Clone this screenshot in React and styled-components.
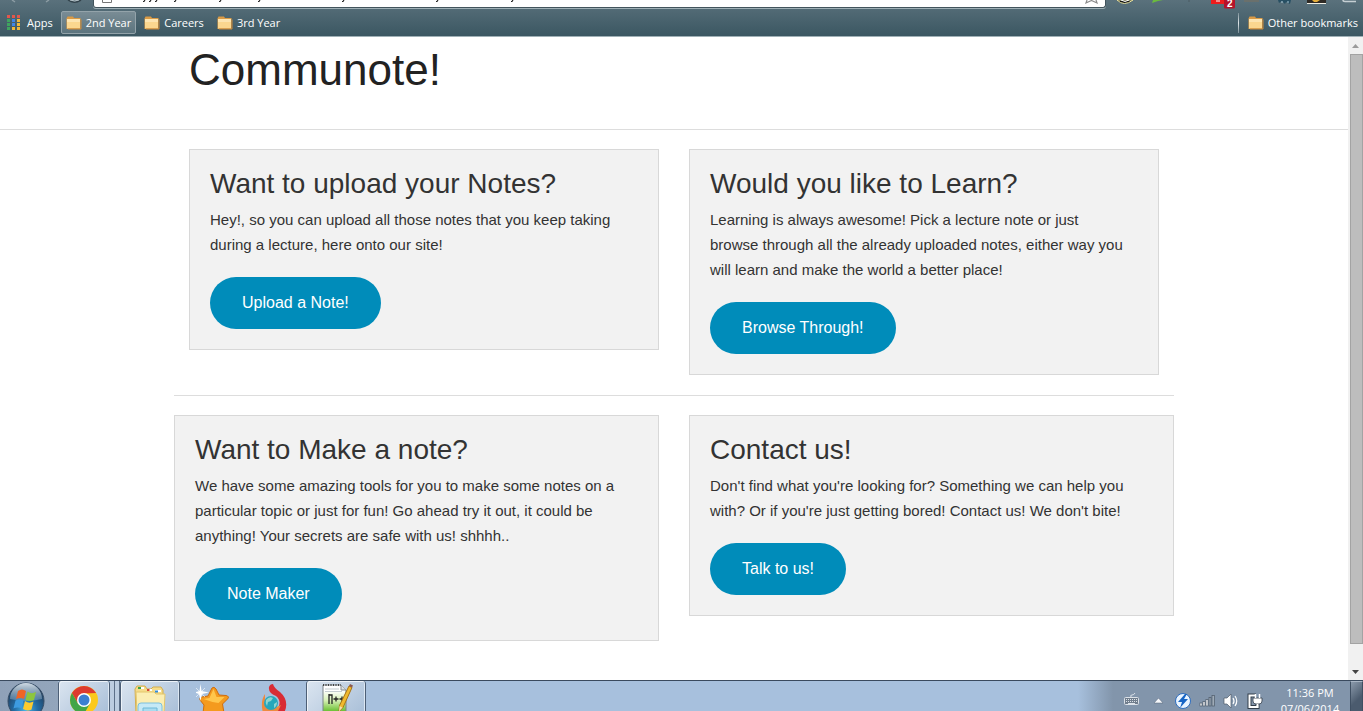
import React from 'react';
import styled, { createGlobalStyle } from 'styled-components';

const GlobalStyle = createGlobalStyle`
  * { box-sizing: border-box; }
  html, body { margin: 0; }
  body { background: #fff; color: #222; font-family: "Liberation Sans", Arial, sans-serif; }
  svg { display: block; flex: none; }
`;

const Desktop = styled.div`
  display: flex;
  flex-direction: column;
  height: 100vh;
  overflow: hidden;
`;

/* Browser chrome */
const Chrome = styled.header`
  flex: none;
  background: linear-gradient(#5a717c, #3b5762);
  border-bottom: 1px solid #9fb0b6;
  font-family: "Open Sans", "Noto Sans", sans-serif;
`;

const AddressRow = styled.div`
  display: flex;
  height: 9px;
  overflow: hidden;
`;

const AddressBox = styled.label`
  flex: 1;
  min-width: 0;
  display: flex;
  height: 8px;
  background: #fff;
  border: 1px solid #42545c;
  border-top: 0;
  border-radius: 0 0 3px 3px;
  box-shadow: 0 1px 0 #9fb0b6;
`;

const AddressInput = styled.input`
  flex: 1;
  min-width: 0;
  height: 6px;
  padding: 0;
  border: 0;
  outline: 0;
  background: transparent;
`;

const BookmarkBar = styled.nav`
  display: flex;
  align-items: center;
  height: 27px;
  padding-left: 2px;
`;

const Bookmark = styled.a`
  display: flex;
  align-items: center;
  gap: 4px;
  height: 23px;
  margin-right: 3px;
  padding: 0 4px;
  border: 1px solid ${p => (p.$active ? '#93a3aa' : 'transparent')};
  border-radius: 2px;
  background: ${p => (p.$active ? 'linear-gradient(#798c95, #5c747e)' : 'none')};
  color: #fff;
  font-size: 11px;
  line-height: 16px;
  text-decoration: none;
  white-space: nowrap;

  &:last-child { margin-right: 0; }
`;

const BarSpacer = styled.div`
  flex: 1;
`;

const BarDivider = styled.span`
  width: 1px;
  height: 20px;
  margin-right: 4px;
  background: linear-gradient(#7b8f98, #dfe6e8, #7b8f98);
`;

/* Page viewport */
const Viewport = styled.div`
  flex: 1;
  min-height: 0;
  display: flex;
`;

const Page = styled.main`
  flex: 1;
  min-width: 0;
  overflow: hidden;
`;

const Masthead = styled.div`
  padding: 2px 0 28px;
  border-bottom: 1px solid #ddd;
`;

const Container = styled.div`
  max-width: 1000px;
  margin: 0 auto;
`;

const SiteTitle = styled.h1`
  margin: 0;
  padding: 0 15px;
  color: #222;
  font-size: 44px;
  font-weight: 400;
  line-height: 62px;
`;

const Row = styled.section`
  display: grid;
  grid-template-columns: 1fr 1fr;
  gap: 30px;
  align-items: start;
  padding: 19px ${p => (p.$inset ? 15 : 0)}px 20px;
`;

const Rule = styled.hr`
  height: 1px;
  margin: 0;
  border: 0;
  background: #ddd;
`;

const Panel = styled.article`
  padding: 20px;
  border: 1px solid #d8d8d8;
  background: #f2f2f2;
`;

const PanelTitle = styled.h3`
  margin: 0 0 10px;
  color: #333;
  font-size: 28px;
  font-weight: 400;
  line-height: 27px;
`;

const PanelText = styled.p`
  margin: 0 0 20px;
  color: #333;
  font-size: 15px;
  line-height: 25px;
  white-space: pre-line;
`;

const RoundButton = styled.button`
  display: block;
  height: 52px;
  padding: 0 32px;
  border: 0;
  border-radius: 26px;
  background: #008cba;
  color: #fff;
  font-family: inherit;
  font-size: 16px;
  line-height: 20px;
  cursor: pointer;
`;

const ScrollTrack = styled.div`
  flex: none;
  display: flex;
  flex-direction: column;
  align-items: center;
  width: 15px;
  background: #f1f1f1;
`;

const ScrollArrow = styled.span`
  display: flex;
  align-items: center;
  justify-content: center;
  width: 15px;
  height: 17px;
`;

const ScrollThumb = styled.div`
  flex: 1;
  width: 13px;
  margin: 0 0 0 2px;
  border: 1px solid #a3a3a3;
  background: #bdbdbd;
`;

const ScrollGap = styled.div`
  height: 19px;
`;

/* Taskbar */
const Taskbar = styled.footer`
  flex: none;
  display: flex;
  height: 31px;
  overflow: hidden;
  border-top: 1px solid #3a4a5e;
  background: #a7c0dd;
  font-family: "Open Sans", "Noto Sans", sans-serif;
`;

const StartButton = styled.button`
  width: 58px;
  padding: 0;
  border: 0;
  background: linear-gradient(90deg, #8fa1b8, #93a5bb);
`;

const TaskButton = styled.button`
  display: flex;
  justify-content: center;
  width: ${p => p.$width}px;
  height: 32px;
  margin-right: ${p => p.$after || 0}px;
  padding: 0;
  border: 1px solid ${p => (p.$open ? '#4d5f76' : 'transparent')};
  border-top: 0;
  border-radius: 3px 3px 0 0;
  background: ${p => (p.$open ? 'linear-gradient(135deg, #dbe5f0, #a9bfd8)' : 'none')};
  box-shadow: ${p => (p.$open ? 'inset 1px 1px 0 #edf3f9, inset -1px 0 0 #dce7f2' : 'none')};
`;

const StackEdge = styled.span`
  width: 5px;
  height: 32px;
  border-right: 1px solid #5d7088;
  background: #bccde0;
`;

const Tray = styled.div`
  display: flex;
  align-items: flex-start;
  margin-left: auto;
  padding-left: 40px;
  background: linear-gradient(90deg, #a7c0dd 15px, #8295ab 50px);
`;

const Clock = styled.time`
  width: 80px;
  padding-top: 4px;
  color: #fff;
  font-size: 11px;
  line-height: 16px;
  text-align: center;
`;

const ShowDesktop = styled.button`
  width: 13px;
  height: 32px;
  padding: 0;
  border: 1px solid #3f4f62;
  border-top-color: #a9b6c5;
  background: linear-gradient(135deg, #8b9aab, #4b5b6e 60%);
`;

const FolderIcon = () => (
  <svg width="16" height="16" viewBox="0 0 16 16" aria-hidden="true">
    <path d="M.5 3.5 1.500 1.500h5.500l1 1.500h6.500V14H.5Z" fill="#d99a45" />
    <path d="M1 4h13v9.500H1Z" fill="#fbd78f" />
    <path d="M1 4h13v3H1Z" fill="#fde5b1" />
    <path d="M15 4.500V14H2" fill="none" stroke="#c98a3c" />
  </svg>
);

const appColors = [
  '#e2574c', '#e2574c', '#e2574c',
  '#3fa55f', '#3f86e8', '#f0b93a',
  '#3fa55f', '#3f86e8', '#f0b93a',
  '#3fa55f', '#f0b93a', '#f0b93a',
];

const AppsIcon = () => (
  <svg width="16" height="15" viewBox="0 0 16 15" aria-hidden="true">
    {appColors.map((c, i) => (
      <rect key={i} x={(i % 3) * 5} y={Math.floor(i / 3) * 4} width="3" height="3" fill={c} />
    ))}
  </svg>
);

const NavButtons = () => (
  <svg width="93" height="8" viewBox="0 0 93 8" aria-hidden="true">
    <path d="M12 0l3 2M46 2l3-2" stroke="#8b9ba3" strokeWidth="1.500" />
    <path d="M68 0q6 4.500 13 0" fill="none" stroke="#33434c" strokeWidth="1.500" />
    <path d="M70 0q5 2 9 0" fill="none" stroke="#b7c3c8" />
  </svg>
);

const urlMarks = [48, 54, 60, 79, 124, 163, 247, 341, 416];

const PageGlyph = () => (
  <svg width="440" height="7" viewBox="0 0 440 7" aria-hidden="true">
    <path d="M8.500 0v2.500h9V0" fill="none" stroke="#777" />
    {urlMarks.map(x => (
      <path key={x} d={`M${x + 3} 0l-1 1.500h-1`} fill="none" stroke="#222" strokeWidth="1.200" />
    ))}
  </svg>
);

const StarGlyph = () => (
  <svg width="22" height="7" viewBox="0 0 22 7" aria-hidden="true">
    <path d="M4 0 3 3 8.500 .500 14 3 13 0" fill="none" stroke="#8a8a8a" strokeWidth="1.200" />
  </svg>
);

const ExtensionIcons = () => (
  <svg width="257" height="9" viewBox="0 0 257 9" aria-hidden="true">
    <path d="M11 0q7 7 16 0Z" fill="#161616" stroke="#e9e3a0" strokeWidth="1" />
    <path d="M15 0q4 3 8 0" fill="none" stroke="#fff" />
    <path d="M46 3 47 0h10l-5 1Z" fill="#6bbb3e" />
    <path d="M83 0v2" stroke="#4b5b63" />
    <path d="M105 0h16v4h-16Z" fill="#ee1c1c" />
    <path d="M110 1h4" stroke="#fff" />
    <rect x="118" y="-4" width="11" height="12.500" rx="1.500" fill="#b4122a" />
    <text x="121" y="7" fill="#fff" fontSize="10" fontWeight="700" fontFamily="Liberation Sans">2</text>
    <path d="M138 1h15" stroke="#6a706c" strokeWidth="2" />
    <path d="M172 0l1 3 3-2 3 3 1-2 4 2 1-4Z" fill="#274f63" />
    <path d="M175 2h2m4 0h2" stroke="#a8c9d8" />
    <path d="M201 0h19v3h-19Z" fill="#2e2924" />
    <path d="M206 0h8l-3 2h-3Z" fill="#e4ad3b" />
    <path d="M201 3.500h19" stroke="#f0eee4" />
    <path d="M237 0q0 1.500 2 1.500h11" fill="none" stroke="#c5cfd3" strokeWidth="1.500" />
  </svg>
);

const WindowsOrb = () => (
  <svg width="58" height="30" viewBox="0 0 58 30" aria-hidden="true">
    <defs>
      <radialGradient id="orb" cx="50%" cy="75%" r="65%">
        <stop offset="0" stopColor="#48b5e8" />
        <stop offset=".5" stopColor="#236ca4" />
        <stop offset="1" stopColor="#233f5e" />
      </radialGradient>
      <linearGradient id="shine" x1="0" y1="0" x2="0" y2="1">
        <stop offset="0" stopColor="#e3edf5" stopOpacity=".9" />
        <stop offset="1" stopColor="#a8c3d7" stopOpacity=".3" />
      </linearGradient>
    </defs>
    <circle cx="26" cy="20" r="18" fill="url(#orb)" stroke="#354c65" />
    <path d="M10 18a16 16 0 0 1 32 0q-16 4-32 0Z" fill="url(#shine)" />
    <path d="M18 10q4-3 8 0l-2 8q-4-2-8 0Z" fill="#ef6526" />
    <path d="M27.500 10.500q4 3 8.500 .500l-2 8q-4 2-8.500 0Z" fill="#8cc63f" />
    <path d="M15.500 19.500q4-2 8 0l-2 8q-4-2-8 0Z" fill="#3d9be0" />
    <path d="M25 20q4 3 8.500 .500l-2 8q-4 2-8.500-.500Z" fill="#fccb2f" />
  </svg>
);

const ChromeIcon = () => (
  <svg width="30" height="32" viewBox="0 0 30 32" aria-hidden="true">
    <circle cx="15" cy="19" r="14" fill="#fbc91b" />
    <path d="M2.900 12A14 14 0 0 1 27.100 12L15 12.500 9 22.500Z" fill="#dd3b2f" />
    <path d="M2.900 12A14 14 0 0 0 15 33L21 22.500 9 22.500Z" fill="#43a548" />
    <circle cx="15" cy="19" r="7" fill="#fff" />
    <circle cx="15" cy="19" r="5.500" fill="#3c7fd0" />
  </svg>
);

const ExplorerIcon = () => (
  <svg width="34" height="32" viewBox="0 0 34 32" aria-hidden="true">
    <path d="M2 8 4 5h8l2 3h4l2-2h8l2 3v23H3Z" fill="#f5dc8a" stroke="#d3ad4d" />
    <path d="M5 7h6M14 9h5M22 10h6" stroke="#fff" strokeWidth="2" />
    <path d="M5 7h3" stroke="#3ca545" strokeWidth="2" />
    <path d="M14 9h2.500" stroke="#d94632" strokeWidth="2" />
    <path d="M22 10.500h3" stroke="#318bd6" strokeWidth="2" />
    <path d="M3 11h18l2 2h9l-1 19H4Z" fill="#fbeeb3" stroke="#e3c66c" />
    <path d="M5 32v-7q0-3 3-3h18q3 0 3 3v7" fill="#c5e9f6" stroke="#7cc0dd" />
    <path d="M10 32v-5h14v5" fill="#a9dcef" stroke="#6cb8d8" />
  </svg>
);

const StarIcon = () => (
  <svg width="34" height="32" viewBox="0 0 34 32" aria-hidden="true">
    <path d="M16 7q2-2 4 1l3 6 7 .500q4 1 1.500 3.500L26.500 23l1.500 9H7l1-8-4-5q-1-3 2-3l6-1Z" fill="#f49a1e" stroke="#cf6c0c" />
    <path d="M17.500 8l3 8 8 0-6 6-6-1-9-3 6-1Z" fill="#ffc64c" />
    <path d="m4.500 3 1 7L13 11.500l-7 1.500L4.500 20 3 13-2 11.500l5.500-1.500Z" fill="#fff" />
    <path d="m0 7 9 9M9 7l-9 9" stroke="#fff" opacity=".6" />
  </svg>
);

const FlameIcon = () => (
  <svg width="32" height="32" viewBox="0 0 32 32" aria-hidden="true">
    <path d="M14 3q1 4 7 8 10 9 4 21H11l8-5q4-7-2-12-8-3-7-9 1-3 4-3Z" fill="#d92c34" />
    <path d="M6 13q-5 7-2 19h14l4-8-9 4-7-6Z" fill="#ed8a3f" />
    <circle cx="12" cy="22" r="7" fill="#26a7bc" />
    <path d="M7 19q3-4 7-2l-2 3-3 1-1 4q-2-3-1-6Zm8 4 3-2q0 4-3 6Z" fill="#90d5cf" />
  </svg>
);

const NotepadIcon = () => (
  <svg width="34" height="32" viewBox="0 0 34 32" aria-hidden="true">
    <defs>
      <linearGradient id="note" x1="0" y1="0" x2="0" y2="1">
        <stop offset=".2" stopColor="#fff" />
        <stop offset=".55" stopColor="#d6f0b4" />
        <stop offset="1" stopColor="#58b81d" />
      </linearGradient>
    </defs>
    <path d="M4 4h18l5 5v23H4Z" fill="url(#note)" stroke="#7d8489" />
    <path d="M22 4v5h5" fill="#dce2e4" stroke="#858c90" />
    <path d="M4 4h18" stroke="#444" strokeWidth="2" strokeDasharray="1 1.500" />
    <path d="M6 8h14M6 10.500h17" stroke="#c5cdd0" />
    <path d="M10 23v-9h3v9M10 13v9M14.500 18h5M17 15.500v5M20.500 18h5M23 15.500v5" fill="none" stroke="#222" strokeWidth="1.300" />
    <path d="m30 5 3 1.500-9 20-4 4 .500-6Z" fill="#f0b92d" stroke="#a77519" />
    <path d="m30 5 1-2 3 1.500-1 2Z" fill="#8c5950" />
    <path d="m20.500 25 3 1.500-3.500 4Z" fill="#f4dfb2" />
  </svg>
);

const TrayIcons = () => (
  <svg width="167" height="30" viewBox="0 0 167 30" aria-hidden="true">
    <g fill="none" stroke="#dbe1e8">
      <rect x="21.500" y="16.500" width="14" height="7" rx="1" fill="#717e8d" />
      <path d="M23 18.500h11M23 20.500h11" strokeDasharray="1 1" />
      <path d="M25 22.500h7M28 16q-1-2 1-2t3-2" />
    </g>
    <path d="m51 22 4.500-5 4.500 5Z" fill="#f5f7fa" stroke="#56657a" strokeWidth=".500" />
    <circle cx="80" cy="20" r="7.500" fill="#e9f4ff" stroke="#2d6dc0" />
    <path d="m82 13-7 8h4l-2 6 8-9h-4l3-5Z" fill="#1765c5" />
    <g stroke="#4d5a68" strokeWidth=".700">
      <rect x="97" y="22" width="2" height="3" fill="#fff" />
      <rect x="100" y="20.500" width="2" height="4.500" fill="#fff" />
      <rect x="103" y="18.500" width="2" height="6.500" fill="#fff" />
      <rect x="106" y="16.500" width="2" height="8.500" fill="#9eabb7" />
      <rect x="109" y="14.500" width="2.500" height="10.500" fill="#9eabb7" />
    </g>
    <path d="M121 17h3l4-4v14l-4-4h-3Z" fill="#fff" stroke="#4d5a68" strokeWidth=".700" />
    <path d="M130 17q2 3 0 6M132 15q3.500 5 0 10" fill="none" stroke="#fff" strokeWidth="1.200" />
    <path d="M153 14.500h-6.500V26h8v-3" fill="none" stroke="#333e4a" strokeWidth="4" />
    <path d="M153 14.500h-6.500V26h8v-3" fill="none" stroke="#fff" strokeWidth="2" />
    <path d="M150 17h9v3q0 3-3 3h-3q-3 0-3-3Z" fill="#fff" stroke="#333e4a" strokeWidth=".800" />
    <path d="M152.500 17v-4M156.500 17v-4M154.500 23v4" stroke="#fff" strokeWidth="1.500" />
  </svg>
);

const Card = ({ title, text, action }) => (
  <Panel>
    <PanelTitle>{title}</PanelTitle>
    <PanelText>{text}</PanelText>
    <RoundButton type="button">{action}</RoundButton>
  </Panel>
);

const ScrollBar = () => (
  <ScrollTrack aria-hidden="true">
    <ScrollArrow>
      <svg width="7" height="4" viewBox="0 0 7 4"><path d="M0 4 3.500 0 7 4Z" fill="#9b9b9b" /></svg>
    </ScrollArrow>
    <ScrollThumb />
    <ScrollGap />
    <ScrollArrow>
      <svg width="7" height="4" viewBox="0 0 7 4"><path d="M0 0h7L3.500 4Z" fill="#444" /></svg>
    </ScrollArrow>
  </ScrollTrack>
);

export default function App() {
  return (
    <Desktop>
      <GlobalStyle />
      <Chrome>
        <AddressRow>
          <NavButtons />
          <AddressBox>
            <PageGlyph />
            <AddressInput type="text" aria-label="Address" />
            <StarGlyph />
          </AddressBox>
          <ExtensionIcons />
        </AddressRow>
        <BookmarkBar aria-label="Bookmarks">
          <Bookmark href="#apps"><AppsIcon />Apps</Bookmark>
          <Bookmark href="#second" $active><FolderIcon />2nd Year</Bookmark>
          <Bookmark href="#careers"><FolderIcon />Careers</Bookmark>
          <Bookmark href="#third"><FolderIcon />3rd Year</Bookmark>
          <BarSpacer />
          <BarDivider />
          <Bookmark href="#other"><FolderIcon />Other bookmarks</Bookmark>
        </BookmarkBar>
      </Chrome>

      <Viewport>
        <Page>
          <Masthead>
            <Container>
              <SiteTitle>Communote!</SiteTitle>
            </Container>
          </Masthead>
          <Container>
            <Row $inset>
              <Card
                title="Want to upload your Notes?"
                text={'Hey!, so you can upload all those notes that you keep taking\nduring a lecture, here onto our site!'}
                action="Upload a Note!"
              />
              <Card
                title="Would you like to Learn?"
                text={'Learning is always awesome! Pick a lecture note or just\nbrowse through all the already uploaded notes, either way you\nwill learn and make the world a better place!'}
                action="Browse Through!"
              />
            </Row>
            <Rule />
            <Row>
              <Card
                title="Want to Make a note?"
                text={'We have some amazing tools for you to make some notes on a\nparticular topic or just for fun! Go ahead try it out, it could be\nanything! Your secrets are safe with us! shhhh..'}
                action="Note Maker"
              />
              <Card
                title="Contact us!"
                text={"Don't find what you're looking for? Something we can help you\nwith? Or if you're just getting bored! Contact us! We don't bite!"}
                action="Talk to us!"
              />
            </Row>
          </Container>
        </Page>
        <ScrollBar />
      </Viewport>

      <Taskbar>
        <StartButton type="button" aria-label="Start"><WindowsOrb /></StartButton>
        <TaskButton type="button" aria-label="Chrome" $open $width={52}><ChromeIcon /></TaskButton>
        <StackEdge />
        <StackEdge />
        <TaskButton type="button" aria-label="Explorer" $open $width={60} $after={2}><ExplorerIcon /></TaskButton>
        <TaskButton type="button" aria-label="Favourites" $width={62}><StarIcon /></TaskButton>
        <TaskButton type="button" aria-label="Torch" $width={62}><FlameIcon /></TaskButton>
        <TaskButton type="button" aria-label="Notepad++" $open $width={60}><NotepadIcon /></TaskButton>
        <Tray>
          <TrayIcons />
          <Clock>11:36 PM<br />07/06/2014</Clock>
          <ShowDesktop type="button" aria-label="Show desktop" />
        </Tray>
      </Taskbar>
    </Desktop>
  );
}
